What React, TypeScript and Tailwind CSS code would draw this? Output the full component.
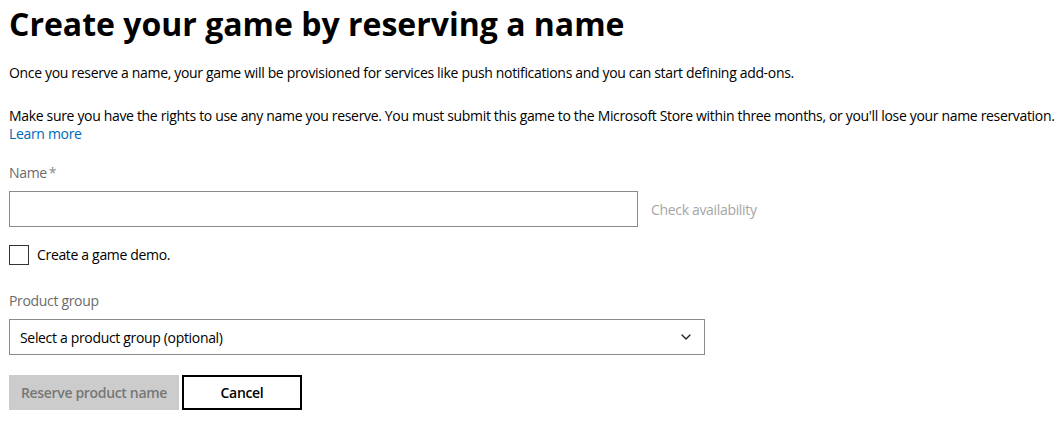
import { ChevronDown } from "lucide-react";

export default function App() {
  return (
    <div className="bg-white w-[1055px] h-[421px] overflow-hidden pl-[9px] text-[14px] tracking-[-0.33px] text-black font-['Open_Sans',sans-serif]">
      <h1 className="h-[48px] leading-[48px] text-[32px] font-bold tracking-[0px] text-black">
        Create your game by reserving a name
      </h1>

      <p className="mt-[16px] leading-[18px]">
        Once you reserve a name, your game will be provisioned for services like push notifications and you can start defining add-ons.
      </p>

      <p className="mt-[25px] leading-[18px] whitespace-nowrap">
        Make sure you have the rights to use any name you reserve. You must submit this game to the Microsoft Store within three months, or you'll lose your name reservation.
        <br />
        <a href="#" className="text-[#0067b8]">Learn more</a>
      </p>

      <label className="block mt-[21px] leading-[18px] text-[#6b6b6b]">
        Name<span className="ml-[2px] text-[#8a8a8a]">*</span>
      </label>

      <div className="mt-[9px] flex items-center gap-[13px]">
        <input type="text" className="w-[629px] h-[36px] border border-[#8a8a8a] px-2 outline-none" />
        <span className="text-[#a6a6a6]">Check availability</span>
      </div>

      <label className="mt-[18px] flex items-center gap-[8px] h-[20px]">
        <span className="w-[20px] h-[20px] border border-[#333]" />
        <span className="leading-[18px]">Create a game demo.</span>
      </label>

      <div className="mt-[27px] leading-[18px] text-[#6b6b6b]">Product group</div>

      <div className="mt-[9px] w-[696px] h-[36px] border border-[#8a8a8a] flex items-center justify-between pl-[10px] pr-[10px]">
        <span>Select a product group (optional)</span>
        <ChevronDown size={16} strokeWidth={2} className="text-[#222]" />
      </div>

      <div className="mt-[20px] flex gap-[3px]">
        <button className="w-[170px] h-[35px] bg-[#cccccc] text-[#777777] font-semibold">
          Reserve product name
        </button>
        <button className="w-[120px] h-[35px] border-2 border-black text-black font-semibold">
          Cancel
        </button>
      </div>
    </div>
  );
}
